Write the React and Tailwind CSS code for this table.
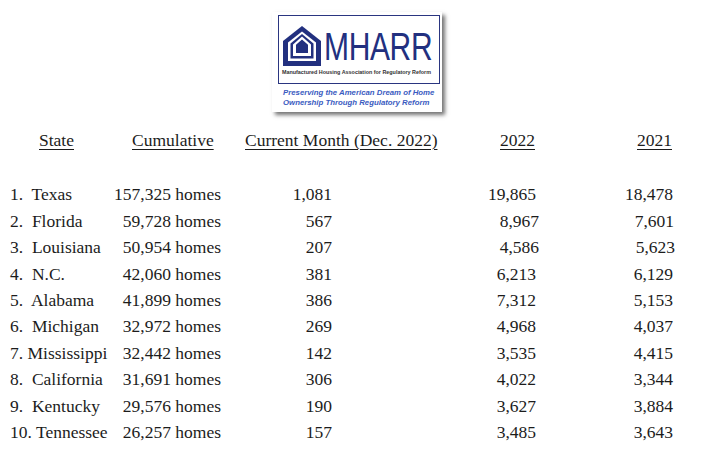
const rows = [
  { s: "1.  Texas", c: "157,325 homes", m: "1,081", y22: "19,865", y21: "18,478" },
  { s: "2.  Florida", c: "59,728 homes", m: "567", y22: "8,967", y21: "7,601", w22: "w-[207px]", w21: "w-[135px]" },
  { s: "3.  Louisiana", c: "50,954 homes", m: "207", y22: "4,586", y21: "5,623", w22: "w-[207px]", w21: "w-[136px]" },
  { s: "4.  N.C.", c: "42,060 homes", m: "381", y22: "6,213", y21: "6,129" },
  { s: "5.  Alabama", c: "41,899 homes", m: "386", y22: "7,312", y21: "5,153" },
  { s: "6.  Michigan", c: "32,972 homes", m: "269", y22: "4,968", y21: "4,037" },
  { s: "7. Mississippi", c: "32,442 homes", m: "142", y22: "3,535", y21: "4,415" },
  { s: "8.  California", c: "31,691 homes", m: "306", y22: "4,022", y21: "3,344" },
  { s: "9.  Kentucky", c: "29,576 homes", m: "190", y22: "3,627", y21: "3,884" },
  { s: "10. Tennessee", c: "26,257 homes", m: "157", y22: "3,485", y21: "3,643" },
];

function House() {
  return (
    <svg width="38" height="40" viewBox="0 0 38 40" className="shrink-0">
      <polygon points="19,0 38,15 38,40 0,40 0,15" fill="#22307f" />
      <polygon points="19,5.5 33,16.5 33,35 5,35 5,16.5" fill="#fff" />
      <polygon points="19,8 30.5,17.5 30.5,32.5 7.5,32.5 7.5,17.5" fill="#22307f" />
      <polygon points="19,10.5 28,18.5 28,30 10,30 10,18.5" fill="#fff" />
      <polygon points="19,13.5 25,18.8 25,27 13,27 13,18.8" fill="#22307f" />
    </svg>
  );
}

function Logo() {
  return (
    <div className="ml-[272px] mt-[12px] w-[170px] h-[100px] bg-white shadow-[3px_3px_4px_rgba(0,0,0,0.55)] pl-[6px] pr-[2px] pt-[3px]">
      <div className="h-[69px] border-[1.5px] border-[#2a3580] flex flex-col">
        <div className="flex items-end pl-[4px] pt-[5px] h-[50px]">
          <House />
          <span className="ml-[3px] text-[39px] leading-[39px] text-[#22307f] scale-x-[0.77] origin-left inline-block tracking-[-0.5px]" style={{ fontFamily: '"Liberation Sans", Arial, sans-serif' }}>
            MHARR
          </span>
        </div>
        <div className="mt-[4px] pl-[3px] text-[5.4px] font-bold text-[#333] whitespace-nowrap leading-none" style={{ fontFamily: '"Liberation Sans", Arial, sans-serif' }}>
          Manufactured Housing Association for Regulatory Reform
        </div>
      </div>
      <div className="mt-[4px] pl-[5px] text-[7.8px] font-bold italic leading-[10px] text-[#3a5bbf] whitespace-nowrap" style={{ fontFamily: '"Liberation Sans", Arial, sans-serif' }}>
        <div>Preserving the American Dream of Home</div>
        <div>Ownership Through Regulatory Reform</div>
      </div>
    </div>
  );
}

export default function App() {
  return (
    <div className="w-[702px] h-[460px] bg-white overflow-hidden text-[#1c1c1c]" style={{ fontFamily: '"Liberation Serif", "Times New Roman", serif' }}>
      <Logo />
      <div className="text-[17.5px] leading-[26.4px]">
        <div className="flex mt-[15px] underline underline-offset-[3px] decoration-1">
          <span className="ml-[39px] w-[93px]">State</span>
          <span className="w-[113px]">Cumulative</span>
          <span className="w-[255px]">Current Month (Dec. 2022)</span>
          <span className="w-[137px]">2022</span>
          <span>2021</span>
        </div>
        <div className="mt-[28px] pl-[10px]">
          {rows.map((r) => (
            <div key={r.s} className="flex whitespace-pre">
              <span className="w-[100px]">{r.s}</span>
              <span className="w-[111px] text-right">{r.c}</span>
              <span className="w-[111px] text-right">{r.m}</span>
              <span className={`text-right ${r.w22 || "w-[204px]"}`}>{r.y22}</span>
              <span className={`text-right ${r.w21 || "w-[137px]"}`}>{r.y21}</span>
            </div>
          ))}
        </div>
      </div>
    </div>
  );
}
